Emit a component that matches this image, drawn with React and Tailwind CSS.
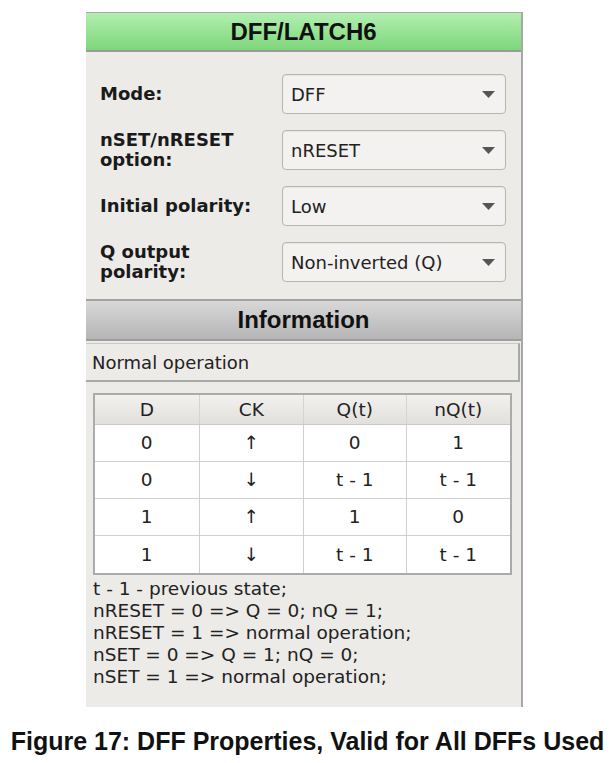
import React from "react";

const dv = { fontFamily: '"DejaVu Sans", sans-serif' };
const lib = { fontFamily: '"Liberation Sans", Arial, sans-serif' };

function Select({ value }) {
  return (
    <div className="w-[224px] h-[40px] rounded-[4px] border border-[#b8b4ae] bg-[#f4f2f0] shadow-[inset_0_1px_1px_rgba(0,0,0,0.06)] flex items-center justify-between pl-[8px] pr-[10px] text-[18px] text-[#222]" style={dv}>
      <span>{value}</span>
      <svg width="13" height="7" viewBox="0 0 13 7"><path d="M0 0 L13 0 L6.5 7 Z" fill="#555" /></svg>
    </div>
  );
}

function Row({ label, value }) {
  return (
    <div className="flex items-center h-[40px]">
      <div className="w-[196px] pl-[14px] font-bold text-[18px] leading-[20px] text-[#1a1a1a]" style={dv}>{label}</div>
      <Select value={value} />
    </div>
  );
}

const rows = [
  ["0", "↑", "0", "1"],
  ["0", "↓", "t - 1", "t - 1"],
  ["1", "↑", "1", "0"],
  ["1", "↓", "t - 1", "t - 1"],
];
const widths = ["w-[105px]", "w-[105px]", "w-[103px]", "w-[104px]"];

export default function App() {
  return (
    <div className="w-[615px] h-[763px] bg-white relative">
      <div className="pt-[12px] pl-[86px]">
        <div className="w-[437px] h-[695px] bg-[#edebe8] border-r-2 border-[#a8a8a8]">
          <div className="h-[40px] border-t border-[#a9a9a9] border-b-2 border-b-[#9a9a9a] bg-gradient-to-b from-[#b2efb0] to-[#7dd67a] flex items-center justify-center font-bold text-[24px] text-[#111]" style={lib}>
            DFF/LATCH6
          </div>
          <div className="pt-[22px] flex flex-col gap-[16px]">
            <Row label="Mode:" value="DFF" />
            <Row label={<>nSET/nRESET<br />option:</>} value="nRESET" />
            <Row label="Initial polarity:" value="Low" />
            <Row label={<>Q output<br />polarity:</>} value="Non-inverted (Q)" />
          </div>
          <div className="mt-[17px] h-[42px] border-t-2 border-[#a3a3a3] border-b-2 border-b-[#9e9e9e] bg-gradient-to-b from-[#d8d8d8] to-[#b5b5b5] flex items-center justify-center font-bold text-[24px] text-[#111]" style={lib}>
            Information
          </div>
          <div className="mt-[2px] h-[39px] border-t border-[#c8c8c8] border-b-2 border-b-[#a9a9a9] border-r-2 border-r-[#a9a9a9] mr-[1px] flex items-center pl-[6px] text-[18px] text-[#222]" style={dv}>
            Normal operation
          </div>
          <div className="mt-[11px] ml-[7px] w-[419px] border-2 border-[#ababab] bg-white text-[18.5px] text-[#222]" style={dv}>
            <div className="flex h-[30px] bg-gradient-to-b from-[#f2f1ef] to-[#e2e0dc] border-b border-[#c9c9c9]">
              {["D", "CK", "Q(t)", "nQ(t)"].map((h, i) => (
                <div key={h} className={`${widths[i]} flex items-center justify-center ${i < 3 ? "border-r border-[#d4d4d4]" : ""}`}>{h}</div>
              ))}
            </div>
            {rows.map((r, ri) => (
              <div key={ri} className={`flex h-[37px] ${ri < 3 ? "border-b border-[#cfcfcf]" : ""}`}>
                {r.map((c, i) => (
                  <div key={i} className={`${widths[i]} flex items-center justify-center ${i < 3 ? "border-r border-[#cfcfcf]" : ""}`}>{c}</div>
                ))}
              </div>
            ))}
          </div>
          <div className="mt-[3px] pl-[7px] text-[18.5px] leading-[22px] text-[#222]" style={dv}>
            <div>t - 1 - previous state;</div>
            <div>nRESET = 0 =&gt; Q = 0; nQ = 1;</div>
            <div>nRESET = 1 =&gt; normal operation;</div>
            <div>nSET = 0 =&gt; Q = 1; nQ = 0;</div>
            <div>nSET = 1 =&gt; normal operation;</div>
          </div>
        </div>
      </div>
      <div className="mt-[22px] text-center font-bold text-[25px] leading-[25px] text-[#111]" style={lib}>
        Figure 17: DFF Properties, Valid for All DFFs Used
      </div>
    </div>
  );
}
